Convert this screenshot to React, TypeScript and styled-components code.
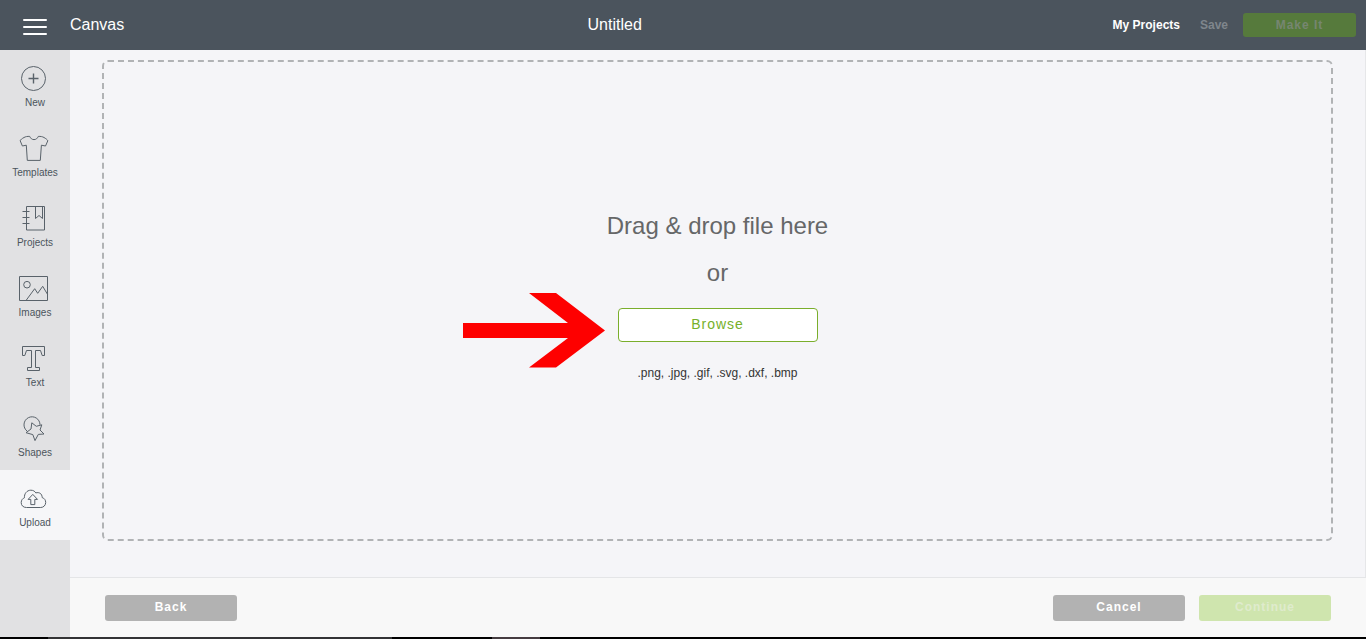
import React from 'react';
import styled, { createGlobalStyle, css } from 'styled-components';

const GlobalStyle = createGlobalStyle`
  *, *::before, *::after { box-sizing: border-box; }
  body {
    margin: 0;
    background: #f5f5f8;
    font-family: "Liberation Sans", Arial, sans-serif;
    color: #4b545c;
  }
  button { font-family: inherit; cursor: pointer; }
  button:disabled { cursor: default; }
`;

const Page = styled.div`
  display: flex;
  flex-direction: column;
  min-height: 100vh;
`;

const Header = styled.header`
  display: grid;
  grid-template-columns: 40% 10% 1fr;
  align-items: center;
  height: 50px;
  background: #4b545d;
  color: #fff;
`;

const HeaderStart = styled.div`
  display: flex;
  align-items: center;
`;

const MenuButton = styled.button`
  display: flex;
  flex-direction: column;
  align-items: center;
  gap: 5px;
  width: 70px;
  padding: 4px 0 0;
  border: 0;
  background: none;
`;

const MenuBar = styled.span`
  width: 24px;
  height: 2px;
  border-radius: 1px;
  background: #fff;
`;

const HeaderText = styled.h1`
  margin: 0;
  font-size: 16px;
  line-height: 20px;
  font-weight: 400;
  text-align: center;
`;

const HeaderEnd = styled.nav`
  display: flex;
  align-items: center;
  justify-content: flex-end;
  padding-right: 10px;
`;

const HeaderLink = styled.a`
  margin-right: 20px;
  color: #fff;
  font-size: 12px;
  line-height: 20px;
  font-weight: 700;
  text-decoration: none;
`;

const SaveButton = styled.button`
  margin-right: 15px;
  padding: 0;
  border: 0;
  background: none;
  color: #7f868c;
  font-size: 12px;
  line-height: 20px;
  font-weight: 700;
`;

const variants = {
  make: css`
    width: 113px;
    height: 24px;
    padding-bottom: 0;
    background: #567a3c;
    color: #768671;
  `,
  neutral: css`
    background: #b2b2b2;
    color: #fff;
  `,
  confirm: css`
    background: #cfe5ae;
    color: #dfebcd;
  `,
};

const ActionButton = styled.button<{ $variant: keyof typeof variants }>`
  width: 132px;
  height: 26px;
  padding: 0 0 3px;
  border: 0;
  border-radius: 3px;
  font-size: 12px;
  line-height: 20px;
  font-weight: 700;
  letter-spacing: 1px;
  ${({ $variant }) => variants[$variant]}
`;

const Body = styled.div`
  display: flex;
  flex: 1;
`;

const Sidebar = styled.nav`
  flex: none;
  width: 70px;
  background: #e1e1e3;
`;

const SideItem = styled.button<{ $active?: boolean }>`
  display: flex;
  flex-direction: column;
  align-items: center;
  gap: 1px;
  width: 100%;
  height: 70px;
  padding: 12px 0 0;
  border: 0;
  background: ${({ $active }) => ($active ? '#f6f6f8' : 'transparent')};
  color: #4b545c;
  font-size: 10px;
  line-height: 12px;
`;

const SideIcon = styled.svg`
  width: 34px;
  height: 34px;
  fill: none;
  stroke: #59626a;
  stroke-width: 1;
  stroke-linejoin: round;
`;

const Content = styled.div`
  display: flex;
  flex: 1;
  flex-direction: column;
`;

const Main = styled.main`
  display: flex;
  flex: 1;
  padding: 10px 32px 36px;
  border-right: 1px solid #e6e7e9;
  background: #f5f5f8;
`;

const DropZone = styled.section`
  display: flex;
  flex: 1;
  flex-direction: column;
  align-items: center;
  justify-content: center;
  padding-bottom: 8px;
  border: 2px dashed #b1b3b5;
  border-radius: 6px;
`;

const DropTexts = styled.div`
  display: flex;
  flex-direction: column;
  gap: 19px;
  margin-bottom: 21px;
  text-align: center;
`;

const DropText = styled.p`
  margin: 0;
  color: #666768;
  font-size: 24px;
  line-height: 28px;
`;

const BrowseRow = styled.div`
  position: relative;
  margin-bottom: 23px;
`;

const BrowseButton = styled.button`
  display: block;
  width: 200px;
  height: 34px;
  padding: 0 0 2px;
  border: 1px solid #7aae2c;
  border-radius: 4px;
  background: #fff;
  color: #76b02a;
  font-size: 14px;
  line-height: 20px;
  letter-spacing: 1px;
`;

const Arrow = styled.svg`
  position: absolute;
  top: -15px;
  right: calc(100% + 13px);
  width: 142px;
  height: 75px;
  fill: #fe0000;
`;

const Formats = styled.p`
  margin: 0;
  color: #333;
  font-size: 12px;
  line-height: 16px;
`;

const Footer = styled.footer`
  display: flex;
  align-items: center;
  gap: 14px;
  height: 60px;
  padding: 1px 35px 0;
  border-top: 1px solid #e4e5e7;
  background: #f8f8f8;
`;

const Spacer = styled.div`
  flex: 1;
`;

const Strip = styled.div`
  display: flex;
  height: 2px;
  background: #000;
`;

const StripPart = styled.span<{ $width: number; $color: string }>`
  width: ${({ $width }) => $width}px;
  background: ${({ $color }) => $color};
`;

const items = [
  {
    label: 'New',
    icon: (
      <>
        <circle cx="15.5" cy="16.5" r="12" />
        <path d="M10.5 16.5h10M15.5 11.5v10" strokeWidth="1.4" />
      </>
    ),
  },
  {
    label: 'Templates',
    icon: (
      <path d="M11.7 4.4C9.5 4.3 7.5 4.6 6 5.5 4 6.6 2.600 7.500 2.200 8.800L4.400 14l3.900-.8 1 15.200h13l1.100-15.200 4.100.8 2.300-5.200c-.5-1.300-2-2.200-3.800-3.300-1.500-.9-3.500-1.200-5.700-1.100C19.300 6.600 18 7.600 16 7.600S12.700 6.600 11.700 4.400z" />
    ),
  },
  {
    label: 'Projects',
    icon: (
      <>
        <path d="M8.5 4.500h18v23.500h-18z" />
        <path d="M4.500 9.500h7M4.500 15.500h7M4.500 21.500h7" />
        <path d="M17.500 4.500v12l3.500-3 3.500 3v-12" />
      </>
    ),
  },
  {
    label: 'Images',
    icon: (
      <>
        <path d="M1.500 4.500h28v24h-28z" />
        <circle cx="9" cy="12.700" r="3.300" />
        <path d="M8 28.500l8.700-11.800 3 4.600 5-7 4.800 8" />
      </>
    ),
  },
  {
    label: 'Text',
    icon: (
      <path d="M4.500 4.500h22v9h-2.300L22.500 8.500h-5v17h4v3h-12v-3h4v-17h-5L6.800 13.500H4.500z" />
    ),
  },
  {
    label: 'Shapes',
    icon: (
      <>
        <path d="M9.200 19.200A8 8 0 1 1 22 12.800" />
        <path d="M13.800 10.800l4.500 3.500 5.500-1.500-1.800 5.200 4 4-5.700.4-3.300 6.200-2.200-6-6.800-1.900 5-3.700z" />
      </>
    ),
  },
  {
    label: 'Upload',
    active: true,
    icon: (
      <>
        <path d="M8.500 25.500C5.200 25.500 3.200 23.500 3.200 20.600c0-2.500 1.600-4.300 3.300-4.900C6 12 8.800 8.200 12.800 8.200c2.400 0 4 1 5 2.700 3.400-1 6.300.7 6.400 4.700 2.200.6 3.500 2.500 3.500 4.900 0 2.800-2.200 5-5 5z" />
        <path d="M14.800 12.400l4.700 5h-2.700v5.200h-4v-5.200h-2.700z" />
      </>
    ),
  },
];

export default function App() {
  return (
    <Page>
      <GlobalStyle />
      <Header>
        <HeaderStart>
          <MenuButton aria-label="Menu">
            <MenuBar />
            <MenuBar />
            <MenuBar />
          </MenuButton>
          <HeaderText>Canvas</HeaderText>
        </HeaderStart>
        <HeaderText as="h2">Untitled</HeaderText>
        <HeaderEnd>
          <HeaderLink href="#projects">My Projects</HeaderLink>
          <SaveButton disabled>Save</SaveButton>
          <ActionButton $variant="make" disabled>Make It</ActionButton>
        </HeaderEnd>
      </Header>
      <Body>
        <Sidebar>
          {items.map(({ label, icon, active }) => (
            <SideItem key={label} $active={active}>
              <SideIcon viewBox="0 0 34 34" aria-hidden="true">{icon}</SideIcon>
              {label}
            </SideItem>
          ))}
        </Sidebar>
        <Content>
          <Main>
            <DropZone>
              <DropTexts>
                <DropText>Drag &amp; drop file here</DropText>
                <DropText>or</DropText>
              </DropTexts>
              <BrowseRow>
                <Arrow viewBox="0 0 142 75" aria-hidden="true">
                  <path d="M0 30h105L66 0h27l49 37.500L93 74.500H66L105 45H0z" />
                </Arrow>
                <BrowseButton>Browse</BrowseButton>
              </BrowseRow>
              <Formats>.png, .jpg, .gif, .svg, .dxf, .bmp</Formats>
            </DropZone>
          </Main>
          <Footer>
            <ActionButton $variant="neutral">Back</ActionButton>
            <Spacer />
            <ActionButton $variant="neutral">Cancel</ActionButton>
            <ActionButton $variant="confirm" disabled>Continue</ActionButton>
          </Footer>
        </Content>
      </Body>
      <Strip>
        <StripPart $width={48} $color="#000" />
        <StripPart $width={344} $color="#333335" />
        <StripPart $width={100} $color="#000" />
        <StripPart $width={48} $color="#453c40" />
      </Strip>
    </Page>
  );
}
